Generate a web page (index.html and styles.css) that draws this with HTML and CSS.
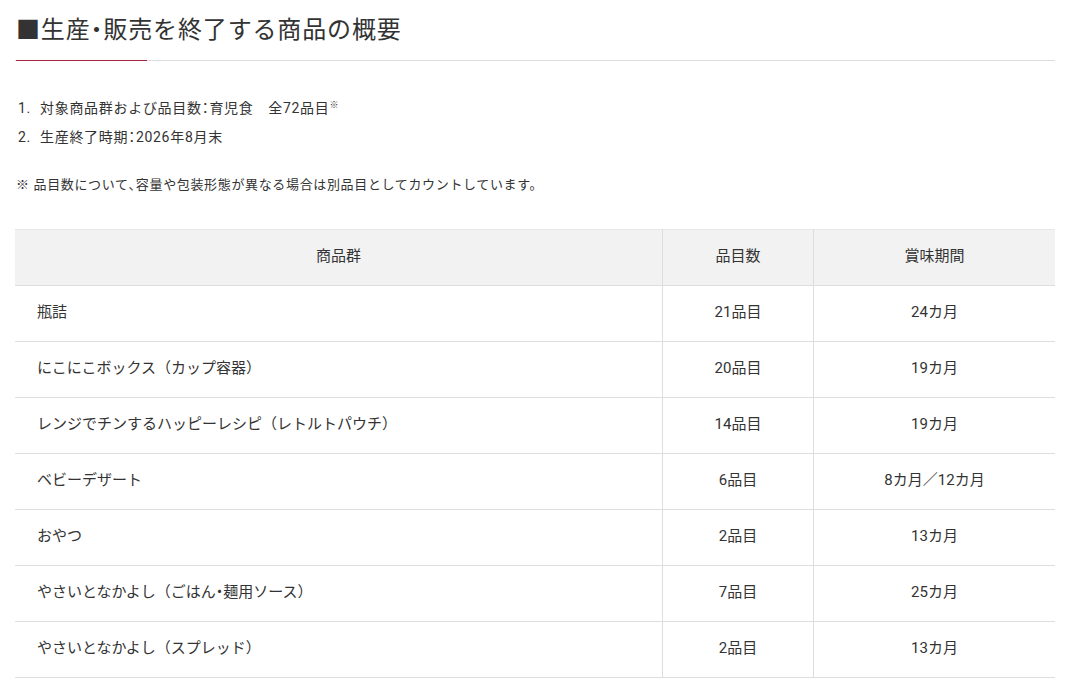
FILE: index.html
```html
<!DOCTYPE html>
<html lang="ja">
<head>
<meta charset="utf-8">
<link rel="stylesheet" href="styles.css">
</head>
<body>
<div class="wrap">
  <h2 class="title">■生産<span class="p">・</span>販売を終了する商品の概要</h2>
  <ol class="list">
    <li><span>対象商品群および品目数<span class="p">：</span>育児食　全72品目<sup>※</sup></span></li>
    <li><span>生産終了時期<span class="p">：</span>2026年8月末</span></li>
  </ol>
  <p class="note">※ 品目数について<span class="p">、</span>容量や包装形態が異なる場合は別品目としてカウントしています。</p>
  <table class="tbl">
    <thead>
      <tr><th class="c1">商品群</th><th class="c2">品目数</th><th class="c3">賞味期間</th></tr>
    </thead>
    <tbody>
      <tr><td class="name">瓶詰</td><td>21品目</td><td>24カ月</td></tr>
      <tr><td class="name">にこにこボックス（カップ容器）</td><td>20品目</td><td>19カ月</td></tr>
      <tr><td class="name">レンジでチンするハッピーレシピ（レトルトパウチ）</td><td>14品目</td><td>19カ月</td></tr>
      <tr><td class="name">ベビーデザート</td><td>6品目</td><td>8カ月／12カ月</td></tr>
      <tr><td class="name">おやつ</td><td>2品目</td><td>13カ月</td></tr>
      <tr><td class="name">やさいとなかよし（ごはん<span class="p">・</span>麺用ソース）</td><td>7品目</td><td>25カ月</td></tr>
      <tr><td class="name">やさいとなかよし（スプレッド）</td><td>2品目</td><td>13カ月</td></tr>
    </tbody>
  </table>
</div>
</body>
</html>
```
FILE: styles.css
```css
html, body { margin: 0; padding: 0; background: #fff; }
body {
  font-family: Roboto, "Noto Sans CJK JP", sans-serif;
  color: #333;
}
.p { font-feature-settings: "palt"; }
.wrap { width: 1040px; margin-left: 15px; }
.title {
  margin: 0;
  padding: 13px 0 13px 1px;
  font-size: 24px;
  font-weight: 400;
  line-height: 34px;
  letter-spacing: 0.85px;
  border-bottom: 1px solid #ddd;
  position: relative;
}
.title::after {
  content: "";
  position: absolute;
  left: 1px; bottom: -1px;
  width: 131px; height: 1px;
  background: #a3263f;
}
.list {
  margin: 33px 0 0 0;
  padding: 0;
  list-style: none;
  counter-reset: item;
  font-size: 14px;
  line-height: 29px;
  letter-spacing: 0.05em;
}
.list li {
  counter-increment: item;
  display: flex;
  padding-left: 3px;
}
.list li::before {
  content: counter(item) ".";
  width: 22px;
  flex: none;
}
.list sup { font-size: 9px; vertical-align: 5px; line-height: 0; letter-spacing: 0; }
.note {
  margin: 23px 0 0 1px;
  font-size: 13px;
  line-height: 20px;
  letter-spacing: 0.05em;
}
.tbl {
  margin-top: 34px;
  width: 1040px;
  border-collapse: collapse;
  font-size: 15px;
  line-height: 20px;
}
.tbl th, .tbl td {
  height: 51px;
  padding: 0 0 4px 0;
  border: 1px solid #ddd;
  text-align: center;
  font-weight: 400;
}
.tbl th { background: #f2f2f2; border-top-color: #e8e8e8; }
.tbl tr > *:first-child { border-left: none; }
.tbl tr > *:last-child { border-right: none; }
.tbl .c1 { width: 647px; }
.tbl .c2 { width: 150px; }
.tbl td.name { text-align: left; padding-left: 22px; }
```
